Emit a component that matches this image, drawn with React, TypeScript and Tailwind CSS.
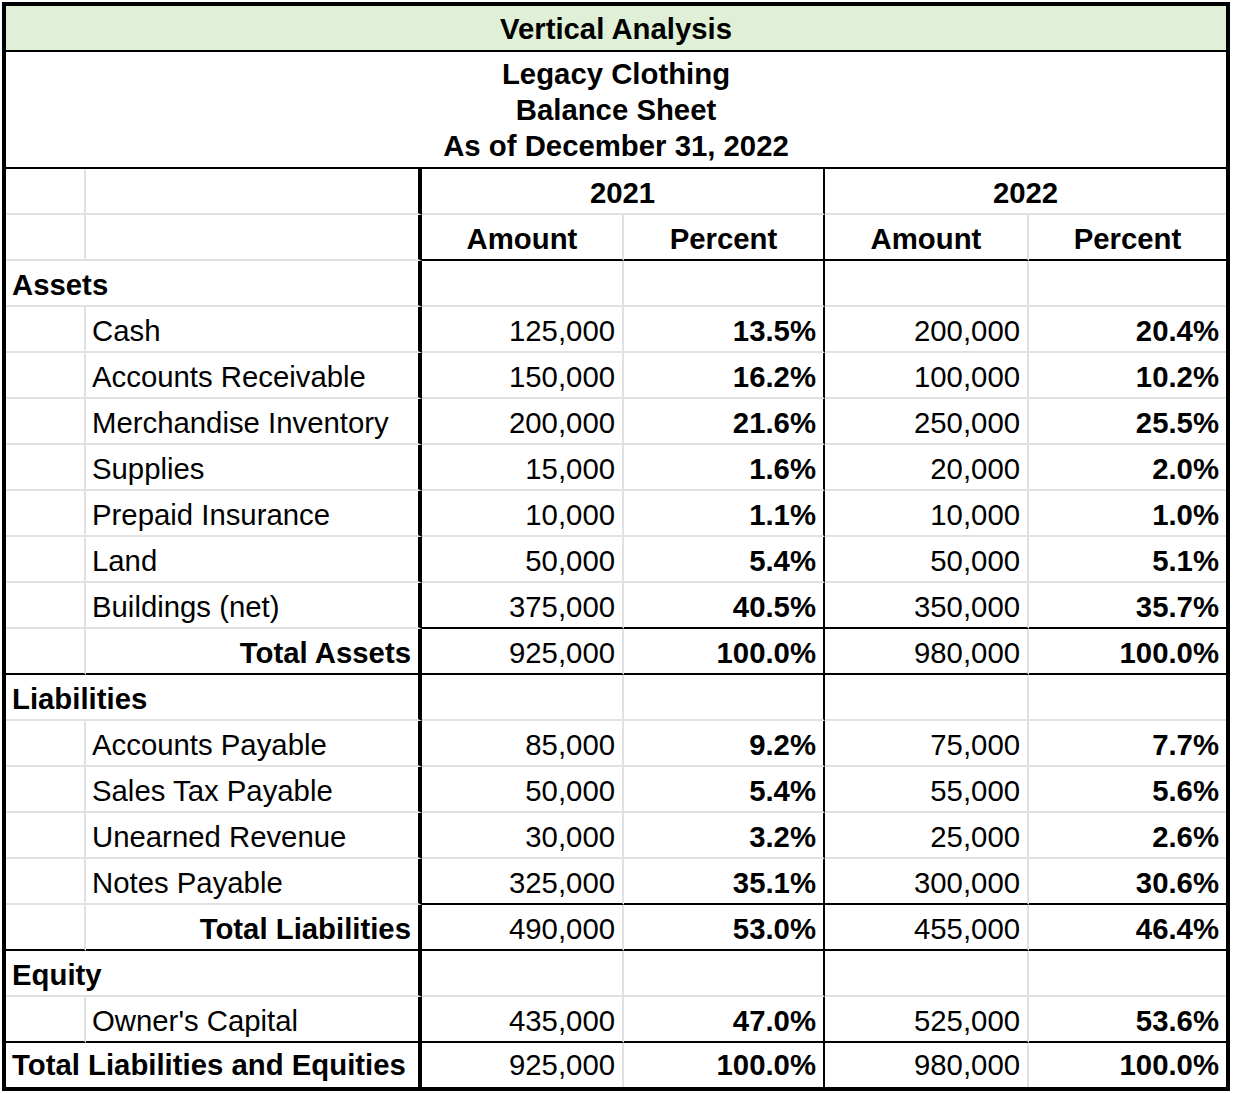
type Line = 'gray' | 'split' | 'black' | 'none'

// row cells: 44px of content plus a 2px bottom rule
const abBottom: Record<Line, string> = {
  gray: 'h-[46px] pt-[4px] border-b-2 border-b-[#e1e1e1]',
  split: 'h-[46px] pt-[4px] border-b-2 border-b-[#e1e1e1]',
  black: 'h-[46px] pt-[4px] border-b-2 border-b-black',
  none: 'h-[44px]',
}

const cfBottom: Record<Line, string> = {
  gray: 'h-[46px] pt-[4px] border-b-2 border-b-[#e1e1e1]',
  split: 'h-[46px] pt-[4px] border-b-2 border-b-black',
  black: 'h-[46px] pt-[4px] border-b-2 border-b-black',
  none: 'h-[44px]',
}

const colA = 'border-r-2 border-r-[#e1e1e1]'
const colB = 'border-r-4 border-r-black'
const colC = 'border-r-2 border-r-[#e1e1e1]'
const colD = 'border-r-2 border-r-black'
const colE = 'border-r-2 border-r-[#e1e1e1]'

const assets = [
  ['Cash', '125,000', '13.5%', '200,000', '20.4%'],
  ['Accounts Receivable', '150,000', '16.2%', '100,000', '10.2%'],
  ['Merchandise Inventory', '200,000', '21.6%', '250,000', '25.5%'],
  ['Supplies', '15,000', '1.6%', '20,000', '2.0%'],
  ['Prepaid Insurance', '10,000', '1.1%', '10,000', '1.0%'],
  ['Land', '50,000', '5.4%', '50,000', '5.1%'],
  ['Buildings (net)', '375,000', '40.5%', '350,000', '35.7%'],
]

const liabilities = [
  ['Accounts Payable', '85,000', '9.2%', '75,000', '7.7%'],
  ['Sales Tax Payable', '50,000', '5.4%', '55,000', '5.6%'],
  ['Unearned Revenue', '30,000', '3.2%', '25,000', '2.6%'],
  ['Notes Payable', '325,000', '35.1%', '300,000', '30.6%'],
]

function Values({ v, line }: { v: string[]; line: Line }) {
  const b = cfBottom[line]
  return (
    <>
      <div className={`${b} ${colC} flex items-center justify-end pr-[7px]`}>{v[0]}</div>
      <div className={`${b} ${colD} flex items-center justify-end pr-[7px] font-bold`}>{v[1]}</div>
      <div className={`${b} ${colE} flex items-center justify-end pr-[7px]`}>{v[2]}</div>
      <div className={`${b} flex items-center justify-end pr-[7px] font-bold`}>{v[3]}</div>
    </>
  )
}

function ItemRow({ label, v, line }: { label: string; v: string[]; line: Line }) {
  return (
    <>
      <div className={`${abBottom[line]} ${colA}`} />
      <div className={`${abBottom[line]} ${colB} flex items-center pl-[6px]`}>{label}</div>
      <Values v={v} line={line} />
    </>
  )
}

function TotalRow({ label, v }: { label: string; v: string[] }) {
  return (
    <>
      <div className={`${abBottom.black} ${colA}`} />
      <div className={`${abBottom.black} ${colB} flex items-center justify-end pr-[7px] font-bold`}>{label}</div>
      <Values v={v} line="black" />
    </>
  )
}

function SectionRow({ label }: { label: string }) {
  const b = cfBottom.gray
  return (
    <>
      <div className={`${abBottom.gray} ${colB} col-span-2 flex items-center pl-[6px] font-bold`}>{label}</div>
      <div className={`${b} ${colC}`} />
      <div className={`${b} ${colD}`} />
      <div className={`${b} ${colE}`} />
      <div className={b} />
    </>
  )
}

export default function App() {
  return (
    <div className="min-h-screen bg-white pl-[2px] pt-[2px] text-black font-['Liberation_Sans',Arial,sans-serif] text-[29.33px]">
      <div className="w-[1228px] border-4 border-black">
        <div className="h-[46px] pt-[2px] bg-[#dff0d6] border-b-2 border-b-black flex items-center justify-center font-bold">
          Vertical Analysis
        </div>
        <div className="h-[117px] border-b-2 border-b-black flex flex-col items-center justify-center font-bold leading-[36px]">
          <span>Legacy Clothing</span>
          <span>Balance Sheet</span>
          <span>As of December 31, 2022</span>
        </div>

        <div className="grid grid-cols-[80px_336px_202px_201px_204px_197px]">
          {/* year header */}
          <div className={`${abBottom.gray} ${colA}`} />
          <div className={`${abBottom.gray} ${colB}`} />
          <div className={`${cfBottom.gray} ${colD} col-span-2 flex items-center justify-center font-bold`}>2021</div>
          <div className={`${cfBottom.gray} col-span-2 flex items-center justify-center font-bold`}>2022</div>

          <div className={`${abBottom.split} ${colA}`} />
          <div className={`${abBottom.split} ${colB}`} />
          <div className={`${cfBottom.split} ${colC} flex items-center justify-center font-bold`}>Amount</div>
          <div className={`${cfBottom.split} ${colD} flex items-center justify-center font-bold`}>Percent</div>
          <div className={`${cfBottom.split} ${colE} flex items-center justify-center font-bold`}>Amount</div>
          <div className={`${cfBottom.split} flex items-center justify-center font-bold`}>Percent</div>

          <SectionRow label="Assets" />
          {assets.map((r, i) => (
            <ItemRow key={r[0]} label={r[0]} v={r.slice(1)} line={i === assets.length - 1 ? 'split' : 'gray'} />
          ))}
          <TotalRow label="Total Assets" v={['925,000', '100.0%', '980,000', '100.0%']} />

          <SectionRow label="Liabilities" />
          {liabilities.map((r, i) => (
            <ItemRow key={r[0]} label={r[0]} v={r.slice(1)} line={i === liabilities.length - 1 ? 'split' : 'gray'} />
          ))}
          <TotalRow label="Total Liabilities" v={['490,000', '53.0%', '455,000', '46.4%']} />

          <SectionRow label="Equity" />
          <ItemRow label="Owner's Capital" v={['435,000', '47.0%', '525,000', '53.6%']} line="black" />

          <div className={`${abBottom.none} ${colB} col-span-2 flex items-center pl-[6px] font-bold`}>
            Total Liabilities and Equities
          </div>
          <Values v={['925,000', '100.0%', '980,000', '100.0%']} line="none" />
        </div>
      </div>
    </div>
  )
}
